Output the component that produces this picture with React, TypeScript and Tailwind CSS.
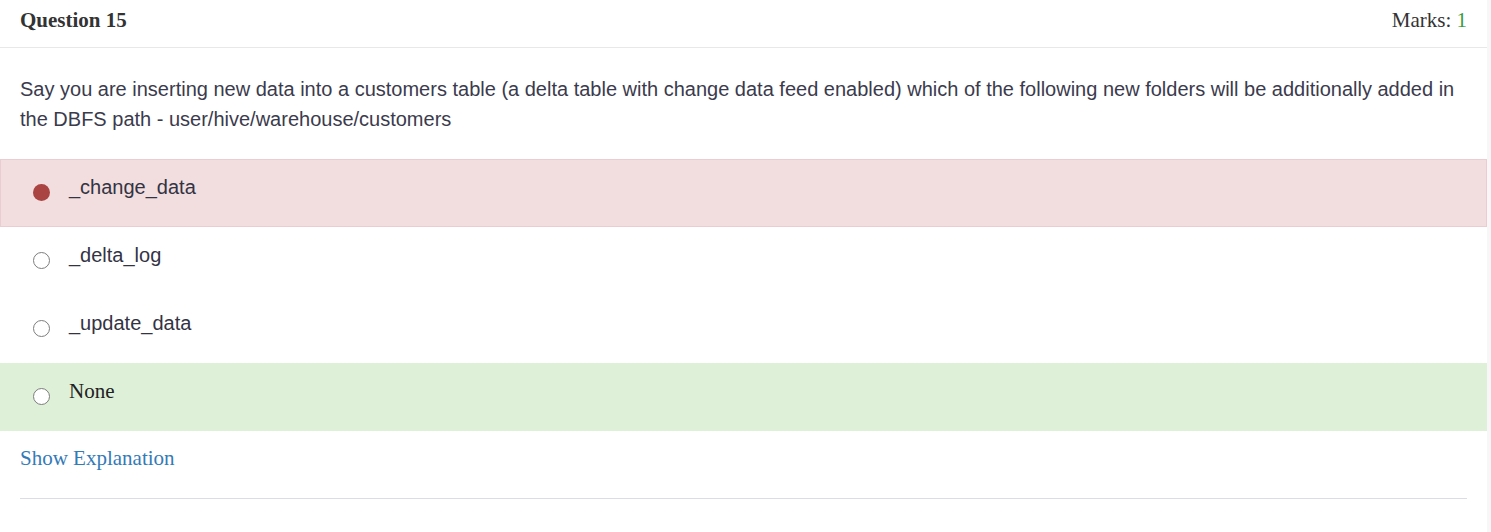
const options = [
  { label: "_change_data", state: "wrong", serif: false },
  { label: "_delta_log", state: "", serif: false },
  { label: "_update_data", state: "", serif: false },
  { label: "None", state: "right", serif: true },
];

const Radio = ({ checked }: { checked: boolean }) =>
  checked ? (
    <span className="mt-[9px] h-[17px] w-[17px] shrink-0 rounded-full bg-[#a94442]" />
  ) : (
    <span className="mt-[9px] h-[17px] w-[17px] shrink-0 rounded-full border-[1.5px] border-[#7d7d7d] bg-white" />
  );

export default function App() {
  return (
    <div className="flex min-h-[532px] w-full bg-[#f7f7f7]">
      <div className="min-h-[532px] w-[1487px] bg-white">
        <div className="flex h-[48px] items-center justify-between border-b border-[#e8e8e8] px-5 pb-[6px] font-['Liberation_Serif',serif] text-[21px] text-[#333]">
          <span className="font-bold">Question 15</span>
          <span>
            Marks: <span className="text-[#3c9a3c]">1</span>
          </span>
        </div>

        <p className="px-5 pt-[26px] font-['Liberation_Sans',Arial,sans-serif] text-[20px] leading-[30px] text-[#3b3b4d]">
          Say you are inserting new data into a customers table (a delta table with change data feed enabled) which of
          the following new folders will be additionally added in the DBFS path - user/hive/warehouse/customers
        </p>

        <div className="mt-[25px]">
          {options.map((o) => (
            <div
              key={o.label}
              className={
                "flex h-[68px] items-start border pl-[32px] pt-[15px] " +
                (o.state === "wrong"
                  ? "border-[#ebccd1] bg-[#f2dede]"
                  : o.state === "right"
                  ? "border-transparent bg-[#dff0d8]"
                  : "border-transparent")
              }
            >
              <Radio checked={o.state === "wrong"} />
              <span
                className={
                  "ml-[19px] leading-[24px] " +
                  (o.serif
                    ? "font-['Liberation_Serif',serif] text-[21px] text-[#222]"
                    : "font-['Liberation_Sans',Arial,sans-serif] text-[20px] text-[#333344]")
                }
              >
                {o.label}
              </span>
            </div>
          ))}
        </div>

        <div className="mx-5 border-b border-[#dcdce4] pb-[27px] pt-[15px]">
          <span className="font-['Liberation_Serif',serif] text-[21px] leading-[24px] text-[#337ab7]">
            Show Explanation
          </span>
        </div>
      </div>
    </div>
  );
}
